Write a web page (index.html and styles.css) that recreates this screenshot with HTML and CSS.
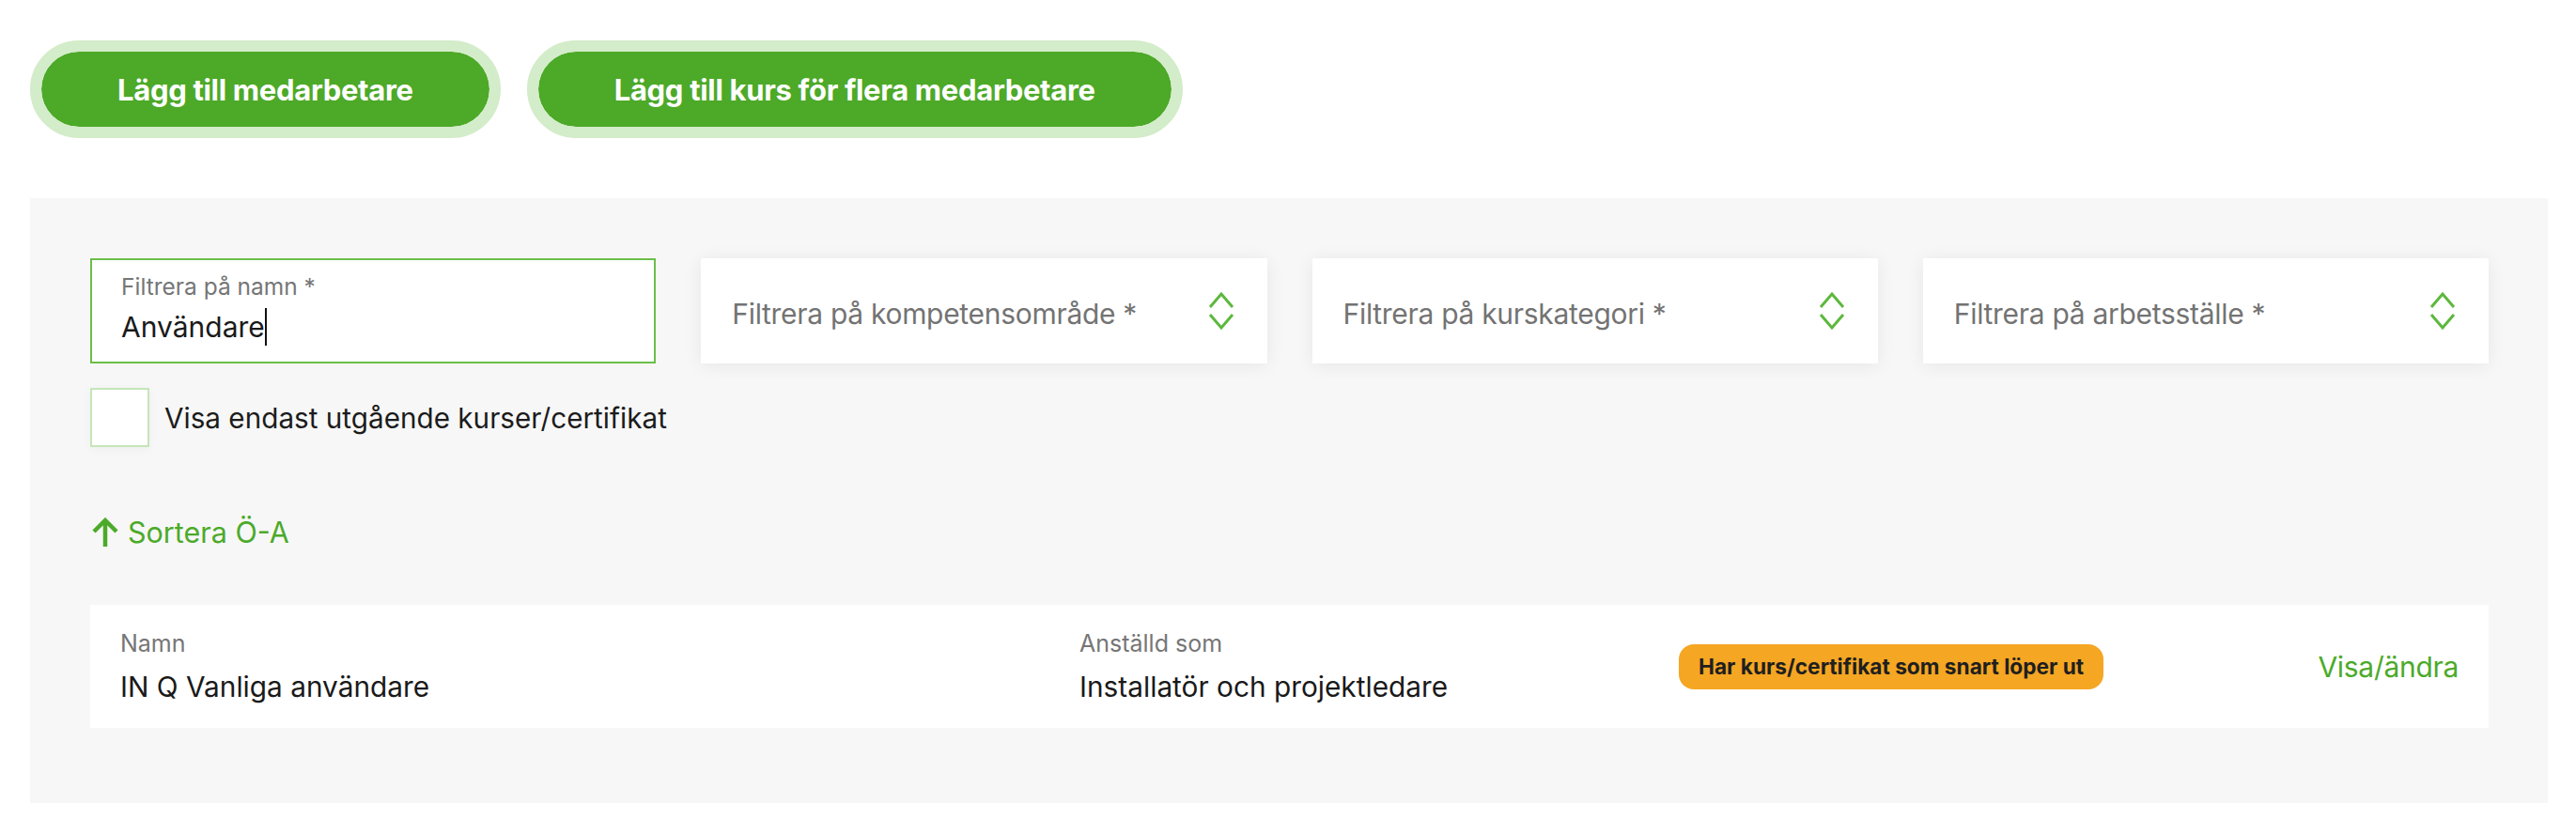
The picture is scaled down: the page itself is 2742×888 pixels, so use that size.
FILE: index.html
```html
<!DOCTYPE html>
<html lang="sv">
<head>
<meta charset="utf-8">
<title>Medarbetare</title>
<link rel="stylesheet" href="styles.css">
</head>
<body>
<div class="page">
  <div class="actions">
    <button class="btn">Lägg till medarbetare</button>
    <button class="btn">Lägg till kurs för flera medarbetare</button>
  </div>

  <section class="panel">
    <div class="filters">
      <div class="field field-text">
        <div class="field-label">Filtrera på namn *</div>
        <div class="field-value">Användare<span class="caret"></span></div>
      </div>
      <div class="field field-select">
        <span class="select-text">Filtrera på kompetensområde *</span>
        <svg class="chev" width="28" height="44" viewBox="0 0 28 44"><path d="M2 18 L14 4 L26 18 M2 26 L14 40 L26 26" fill="none" stroke="#5cb83c" stroke-width="3"/></svg>
      </div>
      <div class="field field-select">
        <span class="select-text">Filtrera på kurskategori *</span>
        <svg class="chev" width="28" height="44" viewBox="0 0 28 44"><path d="M2 18 L14 4 L26 18 M2 26 L14 40 L26 26" fill="none" stroke="#5cb83c" stroke-width="3"/></svg>
      </div>
      <div class="field field-select">
        <span class="select-text">Filtrera på arbetsställe *</span>
        <svg class="chev" width="28" height="44" viewBox="0 0 28 44"><path d="M2 18 L14 4 L26 18 M2 26 L14 40 L26 26" fill="none" stroke="#5cb83c" stroke-width="3"/></svg>
      </div>
    </div>

    <label class="check">
      <span class="check-box"></span>
      <span class="check-text">Visa endast utgående kurser/certifikat</span>
    </label>

    <div class="sort">
      <svg class="sort-arrow" width="30" height="32" viewBox="0 0 30 32"><path d="M15 31 V4 M3 15 L15 3 L27 15" fill="none" stroke="#4caa2a" stroke-width="4.5"/></svg>
      <span class="sort-text">Sortera Ö-A</span>
    </div>

    <div class="row">
      <div class="cell">
        <div class="cell-label">Namn</div>
        <div class="cell-value">IN Q Vanliga användare</div>
      </div>
      <div class="cell">
        <div class="cell-label">Anställd som</div>
        <div class="cell-value">Installatör och projektledare</div>
      </div>
      <div class="cell cell-badge">
        <span class="badge">Har kurs/certifikat som snart löper ut</span>
      </div>
      <div class="cell cell-link">
        <a class="link" href="#">Visa/ändra</a>
      </div>
    </div>
  </section>
</div>
</body>
</html>
```

FILE: styles.css
```css
* { box-sizing: border-box; }

html, body {
  margin: 0;
  padding: 0;
  background: #ffffff;
}

body {
  font-family: "Inter", "Liberation Sans", sans-serif;
  color: #1c1c1c;
}

.page {
  width: 2680px;
  margin-left: 32px;
  padding-top: 43px;
}

.actions {
  display: flex;
  gap: 28px;
}

.btn {
  height: 104px;
  padding: 0 81px;
  border: 12px solid #d3ecc9;
  border-radius: 52px;
  background: #4da928;
  background-clip: padding-box;
  color: #ffffff;
  font-family: "Inter", "Liberation Sans", sans-serif;
  font-weight: 700;
  font-size: 31px;
  letter-spacing: -0.01em;
  cursor: pointer;
}

.panel {
  margin-top: 64px;
  background: #f7f7f7;
  padding: 64px 63px 80px 64px;
}

.filters {
  display: grid;
  grid-template-columns: repeat(4, 1fr);
  gap: 48px;
}

.field {
  height: 112px;
  background: #ffffff;
}

.field-text {
  border: 2px solid #6abf4b;
  padding: 13px 31px 0;
}

.field-label {
  font-size: 24.5px;
  line-height: 30px;
  color: #767676;
}

.field-value {
  margin-top: 8px;
  font-size: 30px;
  line-height: 40px;
  color: #1a1a1a;
}

.caret {
  display: inline-block;
  width: 2px;
  height: 40px;
  background: #111;
  vertical-align: top;
}

.field-select {
  display: flex;
  align-items: center;
  justify-content: space-between;
  padding: 0 35px 0 33px;
  box-shadow: 0 2px 18px rgba(0, 0, 0, 0.07);
}

.select-text {
  margin-top: 6px;
  font-size: 30px;
  color: #737373;
  letter-spacing: -0.01em;
}

.chev { display: block; }

.check {
  margin-top: 26px;
  display: flex;
  align-items: center;
  gap: 16px;
}

.check-box {
  width: 63px;
  height: 63px;
  background: #ffffff;
  border: 2px solid #c4e6b8;
  box-shadow: 0 2px 10px rgba(0, 0, 0, 0.04);
}

.check-text {
  font-size: 29.7px;
  line-height: 40px;
  color: #1c1c1c;
}

.sort {
  margin-top: 71px;
  display: flex;
  align-items: center;
  gap: 9px;
  height: 40px;
}

.sort-arrow { display: block; margin-left: 1px; }

.sort-text {
  font-size: 30.5px;
  line-height: 40px;
  color: #4caa2a;
}

.row {
  margin-top: 57px;
  height: 131px;
  background: #ffffff;
  padding: 0 32px;
  display: grid;
  grid-template-columns: 1021px 638px auto 1fr;
  align-items: center;
}

.cell-label {
  font-size: 25px;
  line-height: 32px;
  color: #767676;
}

.cell-value {
  margin-top: 10px;
  font-size: 29.8px;
  line-height: 40px;
  color: #1a1a1a;
}

.badge {
  display: inline-flex;
  align-items: center;
  height: 48px;
  padding: 0 21px;
  border-radius: 16px;
  background: #f5a623;
  color: #1f1f1f;
  font-weight: 700;
  font-size: 22.7px;
}

.cell-link { text-align: right; }

.link {
  font-size: 30px;
  color: #4caa2a;
  text-decoration: none;
  letter-spacing: -0.01em;
}
```
